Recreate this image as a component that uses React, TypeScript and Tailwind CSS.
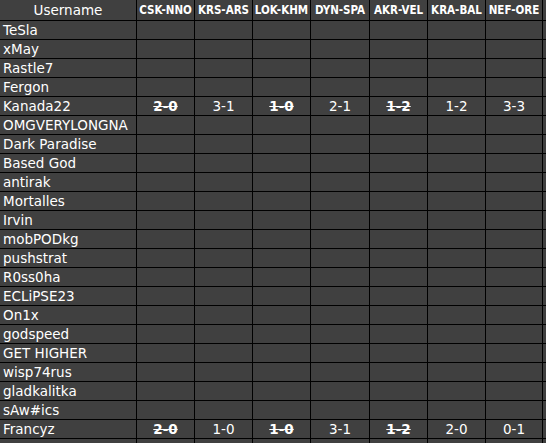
import React from "react";

type Score = { v: string; win?: boolean };

const matches = [
  { code: "CSK-NNO", w: "w-[58px]" },
  { code: "KRS-ARS", w: "w-[58px]" },
  { code: "LOK-KHM", w: "w-[58px]" },
  { code: "DYN-SPA", w: "w-[59px]" },
  { code: "AKR-VEL", w: "w-[58px]" },
  { code: "KRA-BAL", w: "w-[58px]" },
  { code: "NEF-ORE", w: "w-[57px]" },
];

const users = [
  "TeSla",
  "xMay",
  "Rastle7",
  "Fergon",
  "Kanada22",
  "OMGVERYLONGNA",
  "Dark Paradise",
  "Based God",
  "antirak",
  "Mortalles",
  "Irvin",
  "mobPODkg",
  "pushstrat",
  "R0ss0ha",
  "ECLiPSE23",
  "On1x",
  "godspeed",
  "GET HIGHER",
  "wisp74rus",
  "gladkalitka",
  "sAw#ics",
  "Francyz",
  "",
];

// struck-out bold ones are the actual results
const picks: Record<string, Score[]> = {
  Kanada22: [
    { v: "2-0", win: true },
    { v: "3-1" },
    { v: "1-0", win: true },
    { v: "2-1" },
    { v: "1-2", win: true },
    { v: "1-2" },
    { v: "3-3" },
  ],
  Francyz: [
    { v: "2-0", win: true },
    { v: "1-0" },
    { v: "1-0", win: true },
    { v: "3-1" },
    { v: "1-2", win: true },
    { v: "2-0" },
    { v: "0-1" },
  ],
};

const cellFont = { fontFamily: '"DejaVu Sans", sans-serif' };
const headFont = { fontFamily: '"DejaVu Sans Condensed", "DejaVu Sans", sans-serif' };

export default function App() {
  return (
    <div className="w-[546px] h-[443px] overflow-hidden bg-[#404040] text-white">
      {/* header */}
      <div className="flex h-[21px] border-b border-black">
        <div
          className="w-[137px] shrink-0 border-r border-black text-center text-[13.5px] leading-[20px]"
          style={cellFont}
        >
          Username
        </div>
        {matches.map((m) => (
          <div
            key={m.code}
            className={`${m.w} shrink-0 border-r border-black text-center text-[11.5px] font-bold leading-[20px] whitespace-nowrap overflow-hidden`}
            style={headFont}
          >
            {m.code}
          </div>
        ))}
        <div className="flex-1" />
      </div>

      {users.map((u, i) => {
        const row = picks[u];
        return (
          <div key={i} className="flex h-[19px] border-b border-black">
            <div
              className="w-[137px] shrink-0 border-r border-black pl-[3px] text-[13.5px] leading-[19px] whitespace-nowrap overflow-hidden"
              style={cellFont}
            >
              {u}
            </div>
            {matches.map((m, j) => {
              const s = row ? row[j] : null;
              return (
                <div
                  key={m.code}
                  className={`${m.w} shrink-0 border-r border-black text-center text-[13.5px] leading-[19px]`}
                  style={cellFont}
                >
                  {s ? (
                    <span className={s.win ? "font-bold line-through" : ""}>{s.v}</span>
                  ) : null}
                </div>
              );
            })}
            <div className="flex-1" />
          </div>
        );
      })}
    </div>
  );
}
